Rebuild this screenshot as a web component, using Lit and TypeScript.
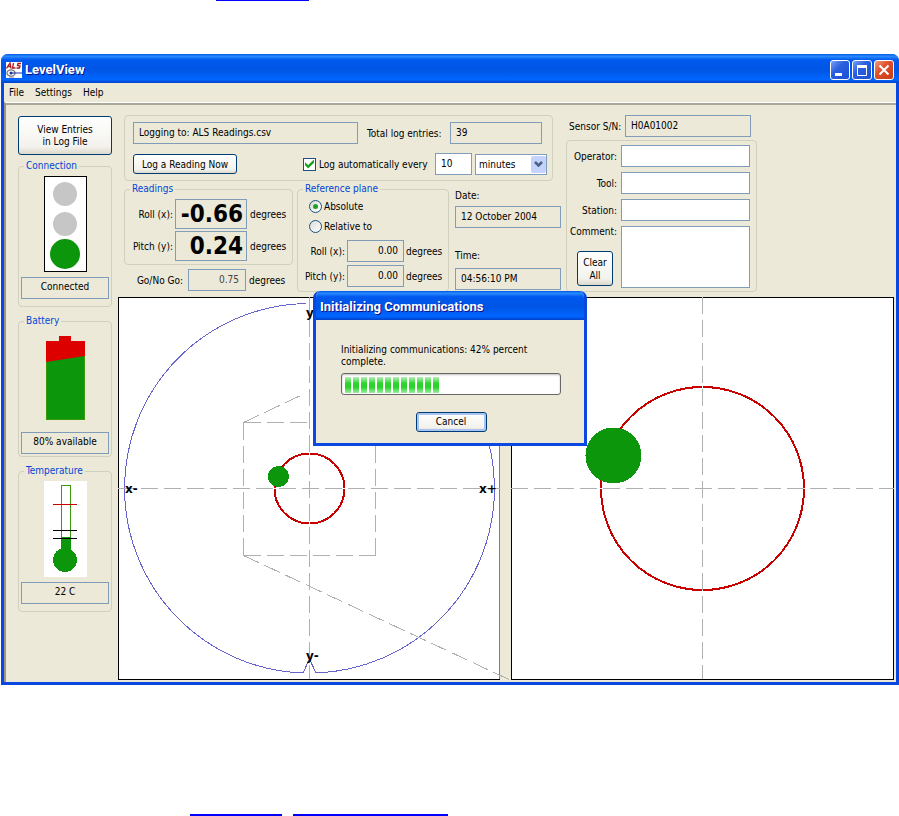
import { LitElement, html, css, svg } from "lit";
import { customElement } from "lit/decorators.js";

const sharedStyles = css`
  *, *::before, *::after { box-sizing: border-box; }
  button, input, select, textarea, output {
    font: inherit;
    color: #000;
    margin: 0;
  }
  .button {
    border: 1px solid #003c74;
    border-radius: 3px;
    background: linear-gradient(#ffffff, #f3f2ec 80%, #dcd8cc);
    padding: 0;
    text-align: center;
  }
  .field {
    height: 22px;
    border: 1px solid #7f9db9;
    border-radius: 0;
    background: #ece9d8;
    padding: 0 5px 2px;
    min-width: 0;
    outline: none;
  }
  .field.edit { background: #fff; }
  .field.right { text-align: right; }
  .field.centre { display: block; text-align: center; line-height: 18px; }
  .group {
    border: 1px solid #d0d0bf;
    border-radius: 4px;
    margin: 0;
    padding: 0;
    min-width: 0;
  }
  .legend {
    color: #0046d5;
    line-height: 14px;
    padding: 0 2px;
    margin-left: 5px;
  }
`;

@customElement("status-sidebar")
class StatusSidebar extends LitElement {
  static styles = [sharedStyles, css`
    :host { display: flex; flex-direction: column; padding: 11px 6px 0 12px; }
    .entries { height: 39px; line-height: 12px; margin-bottom: 4px; }
    .group { height: 148px; margin-bottom: 7px; }
    .group.short { height: 143px; }
    .stack { display: flex; flex-direction: column; gap: 5px; padding: 3px 2px 0; }
    .stack svg { align-self: center; display: block; }
    .group.short .stack { gap: 12px; padding-top: 8px; }
  `];
  render() {
    return html`
      <button class="button entries">View Entries<br />in Log File</button>
      <fieldset class="group">
        <legend class="legend">Connection</legend>
        <div class="stack">
          <svg width="43" height="96" viewBox="0 0 43 96" aria-hidden="true">
            <rect x=".5" y=".5" width="42" height="95" fill="#fff" stroke="#000" />
            <circle cx="21" cy="18" r="12" fill="#c6c6c6" />
            <circle cx="21" cy="48" r="12" fill="#c6c6c6" />
            <circle cx="21" cy="78" r="15" fill="#0b960b" />
          </svg>
          <output class="field centre">Connected</output>
        </div>
      </fieldset>
      <fieldset class="group short">
        <legend class="legend">Battery</legend>
        <div class="stack">
          <svg width="39" height="84" viewBox="0 0 39 84" aria-hidden="true">
            <path d="M13 0h12v5h14v30H0V5h13z" fill="#dc0000" />
            <path d="M0 26L39 20V84H0z" fill="#0b960b" />
            <path d="M.5 26V83.500H38.500V20" fill="none" stroke="#3a9a0b" />
          </svg>
          <output class="field centre">80% available</output>
        </div>
      </fieldset>
      <fieldset class="group">
        <legend class="legend">Temperature</legend>
        <div class="stack">
          <svg width="43" height="96" viewBox="0 0 43 96" shape-rendering="crispEdges" aria-hidden="true">
            <rect width="43" height="96" fill="#fff" />
            <rect x="17.500" y="4.500" width="9" height="62" fill="#fff" stroke="#3a9a0b" />
            <rect x="17" y="56" width="10" height="16" fill="#0b960b" />
            <circle cx="21" cy="79" r="12" fill="#0b960b" />
            <rect x="9" y="23" width="24" height="1" fill="#c80000" />
            <rect x="9" y="49" width="24" height="1" fill="#000" />
            <rect x="9" y="57" width="24" height="1" fill="#000" />
          </svg>
          <output class="field centre">22 C</output>
        </div>
      </fieldset>
    `;
  }
}

@customElement("reading-form")
class ReadingForm extends LitElement {
  static styles = [sharedStyles, css`
    :host { display: flex; gap: 5px; padding: 10px 0 5px 6px; }
    .left { width: 437px; flex: none; }
    .log { width: 429px; height: 66px; padding: 6px 5px 0 8px; margin-bottom: 1px; }
    .row { display: flex; align-items: center; }
    .log .row + .row { margin-top: 9px; }
    .path { flex: 1; margin-right: 9px; }
    .total { width: 83px; white-space: nowrap; }
    .entries { width: 92px; margin-right: 5px; }
    .log-now { width: 104px; height: 20px; margin-right: 66px; }
    .auto { display: flex; align-items: center; flex: 1; gap: 3px; white-space: nowrap; }
    .check {
      appearance: none; width: 13px; height: 13px; flex: none;
      border: 1px solid #1c5180; background: #fff;
      display: grid; place-items: center;
    }
    .check:checked::before {
      content: ""; width: 9px; height: 9px; background: #21a121;
      clip-path: polygon(0 30%, 35% 60%, 100% 0, 100% 35%, 35% 100%, 0 65%);
    }
    .every { width: 37px; margin-right: 3px; }
    .unit { display: grid; width: 72px; height: 21px; }
    .unit select {
      grid-area: 1 / 1; appearance: none; border: 1px solid #7f9db9; border-radius: 0;
      background: #fff; padding: 0 20px 0 3px; outline: none;
    }
    .unit svg { grid-area: 1 / 1; justify-self: end; align-self: center; margin-right: 1px; pointer-events: none; }
    .lower { display: flex; align-items: flex-start; }
    .current { flex: none; width: 169px; }
    .readings { height: 83px; padding: 3px 4px 0 0; }
    .readings .row + .row { margin-top: 2px; }
    .name { flex: 1; text-align: right; padding-right: 2px; white-space: nowrap; }
    .degrees { width: 38px; flex: none; }
    .big {
      width: 72px; height: 30px; font: bold 24px/28px "DejaVu Sans Condensed", sans-serif;
      padding: 0 3px 0 0; margin-right: 3px; flex: none;
    }
    .limit { margin-top: 4px; padding-right: 6px; }
    .limit .field { width: 58px; margin: 0 3px; color: #444; padding-right: 6px; }
    .plane { flex: none; width: 152px; height: 110px; margin: 0 6px 0 4px; }
    .plane .row + .row { margin-top: 3px; }
    .plane .field { width: 57px; margin-right: 2px; flex: none; }
    .plane .angle { padding-right: 4px; }
    .choice { display: flex; align-items: center; gap: 2px; height: 20px; padding-left: 11px; }
    .radio {
      appearance: none; width: 13px; height: 13px; border: 1px solid #1c5180; border-radius: 50%;
      background: linear-gradient(135deg, #dcdcd4, #fff); display: grid; place-items: center;
    }
    .radio:checked::before { content: ""; width: 5px; height: 5px; border-radius: 50%; background: #21a121; }
    .plane .angle.first { margin-top: 4px; }
    .when { flex: 1; min-width: 0; display: flex; flex-direction: column; padding-top: 7px; }
    .when label { line-height: 14px; margin-bottom: 3px; }
    .when .field + label { margin-top: 21px; margin-bottom: 5px; }
    .right-column { width: 191px; flex: none; }
    .serial { padding: 0 6px 0 3px; margin-bottom: 3px; }
    .serial .field { width: 126px; flex: none; }
    .serial label { flex: 1; white-space: nowrap; }
    .details {
      padding: 4px 6px 3px 0; display: grid; grid-template-columns: 50px 129px; gap: 5px 4px;
    }
    .details label { text-align: right; align-self: center; }
    .notes { display: flex; flex-direction: column; justify-content: space-between; align-items: flex-end; }
    .notes label { align-self: flex-end; }
    .notes .button { width: 36px; height: 35px; line-height: 13px; margin: 0 4px 2px 0; }
    .comment { height: 62px; resize: none; }
  `];
  render() {
    return html`
      <div class="left">
        <div class="group log">
          <div class="row">
            <input class="field path" readonly aria-label="Logging to" value="Logging to: ALS Readings.csv" />
            <label class="total" for="total">Total log entries:</label>
            <input class="field entries" id="total" readonly value="39" />
          </div>
          <div class="row">
            <button class="button log-now">Log a Reading Now</button>
            <label class="auto"><input class="check" type="checkbox" checked />Log automatically every</label>
            <input class="field edit every" aria-label="every" value="10" />
            <span class="unit">
              <select aria-label="minutes"><option>minutes</option></select>
              <svg width="15" height="17" viewBox="0 0 15 17" aria-hidden="true">
                <rect width="15" height="17" rx="2" fill="#c3d3fb" />
                <path d="M4 6l3.500 3.500L11 6" fill="none" stroke="#4d6185" stroke-width="2.500" />
              </svg>
            </span>
          </div>
        </div>
        <div class="lower">
          <div class="current">
            <fieldset class="group readings">
              <legend class="legend">Readings</legend>
              <div class="row">
                <label class="name" for="roll">Roll (x):</label>
                <input class="field right big" id="roll" readonly value="-0.66" />
                <span class="degrees">degrees</span>
              </div>
              <div class="row">
                <label class="name" for="pitch">Pitch (y):</label>
                <input class="field right big" id="pitch" readonly value="0.24" />
                <span class="degrees">degrees</span>
              </div>
            </fieldset>
            <div class="row limit">
              <label class="name" for="limit">Go/No Go:</label>
              <input class="field right" id="limit" readonly value="0.75" />
              <span class="degrees">degrees</span>
            </div>
          </div>
          <fieldset class="group plane">
            <legend class="legend">Reference plane</legend>
            <label class="choice"><input class="radio" type="radio" name="plane" checked />Absolute</label>
            <label class="choice"><input class="radio" type="radio" name="plane" />Relative to</label>
            <div class="row angle first">
              <label class="name" for="ref-roll">Roll (x):</label>
              <input class="field right" id="ref-roll" readonly value="0.00" />
              <span class="degrees">degrees</span>
            </div>
            <div class="row angle">
              <label class="name" for="ref-pitch">Pitch (y):</label>
              <input class="field right" id="ref-pitch" readonly value="0.00" />
              <span class="degrees">degrees</span>
            </div>
          </fieldset>
          <div class="when">
            <label for="date">Date:</label>
            <input class="field" id="date" readonly value="12 October 2004" />
            <label for="time">Time:</label>
            <input class="field" id="time" readonly value="04:56:10 PM" />
          </div>
        </div>
      </div>
      <div class="right-column">
        <div class="row serial">
          <label for="serial">Sensor S/N:</label>
          <input class="field" id="serial" readonly value="H0A01002" />
        </div>
        <div class="group details">
          <label for="operator">Operator:</label><input class="field edit" id="operator" />
          <label for="tool">Tool:</label><input class="field edit" id="tool" />
          <label for="station">Station:</label><input class="field edit" id="station" />
          <div class="notes">
            <label for="comment">Comment:</label>
            <button class="button">Clear<br />All</button>
          </div>
          <textarea class="field edit comment" id="comment"></textarea>
        </div>
      </div>
    `;
  }
}

@customElement("level-plot")
class LevelPlot extends LitElement {
  static styles = css`
    :host { display: block; }
    .plot { display: block; width: 100%; height: auto; }
    .axis { font: bold 12px "DejaVu Sans", sans-serif; }
  `;
  render() {
    const dash = (d: string) =>
      svg`<path d=${d} fill="none" stroke="#b0b0b0" stroke-dasharray="17 6" />`;
    return html`
      <svg class="plot" viewBox="0 0 776 383" shape-rendering="crispEdges">
        <rect width="382" height="383" fill="#fff" />
        <path d="M382 .5H.5V382.500H382" fill="none" stroke="#000" />
        <path d="M381.500 1V382" stroke="#808080" />
        <rect x="393.500" y=".5" width="382" height="382" fill="#fff" stroke="#000" />
        <path d="M188 6.500A185 185 0 0 0 6.500 191.500A185 185 0 0 0 185 376L191.500 362L198 376A185 185 0 0 0 376.500 191.500A185 185 0 0 0 195 6.500" fill="none" stroke="#6464cc" />
        <circle cx="191.500" cy="191.500" r="35" fill="none" stroke="#c80000" stroke-width="2" />
        <circle cx="584.500" cy="191.500" r="101.500" fill="none" stroke="#c80000" stroke-width="2" />
        <path d="M150 191.500H230M191.500 150V230M470 191.500H700M584.500 80V300" stroke="#fff" />
        ${dash("M0 191.5H382")}
        ${dash("M191.5 0V382")}
        ${dash("M125.5 125.5H257.5")}
        ${dash("M125.5 125.5V258")}
        ${dash("M257.5 125.5V258")}
        ${dash("M125.5 258.5H258")}
        ${dash("M125.5 125.5L188 96")}
        ${dash("M125.5 258.5L391 382.5")}
        ${dash("M393 191.5H776")}
        ${dash("M584.5 0V382")}
        <circle cx="160.500" cy="179.500" r="10.500" fill="#0b960b" />
        <circle cx="495.500" cy="158.500" r="28" fill="#0b960b" />
        <g class="axis">
          <text x="7" y="196">x-</text>
          <text x="361" y="196">x+</text>
          <text x="188" y="20">y</text>
          <text x="188" y="363">y-</text>
        </g>
      </svg>
    `;
  }
}

@customElement("progress-dialog")
class ProgressDialog extends LitElement {
  static styles = [sharedStyles, css`
    :host {
      display: block; width: 274px;
      border: solid #0a48e0; border-width: 0 3px 3px;
      border-radius: 7px 7px 0 0; background: #ece9d8; overflow: hidden;
    }
    .title {
      height: 29px; margin: 0 -3px; padding-left: 7px;
      background: linear-gradient(#0058e6, #2a8bff 8%, #0058ee 20%, #0055e5 55%, #0066ff 88%, #0040c8);
      color: #fff; font: bold 13px/32px Roboto, sans-serif; text-shadow: 1px 1px #0f1089;
    }
    .content { padding: 24px 23px 11px 25px; display: flex; flex-direction: column; }
    .message { margin: 0 0 5px; line-height: 12px; }
    .bar {
      height: 22px; border: 1px solid #686868; border-radius: 3px; background: #fff;
      box-shadow: inset 0 1px 2px #bebebe; display: flex; gap: 2px; padding: 3px;
    }
    .block { width: 6px; height: 16px; background: linear-gradient(#b8f0b8, #2cd42c 40%, #2cd42c 65%, #a0eca0); }
    .button {
      align-self: center; width: 71px; height: 20px; margin-top: 17px;
      box-shadow: inset 0 0 0 2px #a9c4f4;
    }
  `];
  render() {
    return html`
      <div class="title">Initializing Communications</div>
      <div class="content">
        <p class="message">Initializing communications: 42% percent<br />complete.</p>
        <div class="bar" role="progressbar" aria-valuenow="42">
          ${Array.from({ length: 12 }, () => html`<span class="block"></span>`)}
        </div>
        <button class="button">Cancel</button>
      </div>
    `;
  }
}

@customElement("app-root")
class AppRoot extends LitElement {
  static styles = [sharedStyles, css`
    :host {
      display: flow-root; background: #fff; color: #000;
      font: 10px "DejaVu Sans Condensed", Roboto, sans-serif;
    }
    .underlines { display: flex; gap: 11px; }
    .underlines.top { padding-left: 216px; }
    .underlines.bottom { padding-left: 190px; margin-top: 129px; }
    .underline { height: 2px; background: #0000ff; width: 92px; }
    .top .underline { height: 1px; width: 93px; }
    .underline.long { width: 155px; }
    .window {
      margin: 53px 0 0 1px; display: grid;
      border: solid #0848e0; border-width: 0 3px 3px;
      border-radius: 7px 7px 0 0; background: #ece9d8;
    }
    .frame { grid-area: 1 / 1; min-width: 0; }
    .overlay { grid-area: 1 / 1; place-self: center; }
    .title {
      height: 29px; margin: 0 -3px; padding: 3px 5px 0; display: flex; align-items: center;
      border-radius: 7px 7px 0 0;
      background: linear-gradient(#0058e6, #2a8bff 8%, #0058ee 20%, #0055e5 55%, #0066ff 88%, #0040c8);
    }
    .name { flex: 1; margin-left: 3px; font: bold 13px/20px Roboto, sans-serif; color: #fff; text-shadow: 1px 1px #0f1089; }
    .controls { display: flex; gap: 2px; }
    .control {
      width: 20px; height: 20px; padding: 0; border: 1px solid #fff; border-radius: 3px;
      background: linear-gradient(135deg, #7ba2f4, #2a5fe0 40%, #1f50d0); display: grid; place-items: center;
    }
    .control.close { background: linear-gradient(135deg, #f0a088, #e0502a 40%, #c83c14); }
    .menu { display: flex; gap: 11px; height: 19px; padding-left: 5px; }
    .menu button { border: 0; background: none; padding: 0; line-height: 18px; }
    .body { border-top: 1px solid #fff; border-left: 2px solid #9a968c; padding-bottom: 2px; }
    .inner { display: flex; border-top: 2px solid #a9a69a; padding-right: 2px; }
    .side { width: 112px; flex: none; }
    .main { flex: 1; min-width: 0; }
  `];
  render() {
    return html`
      <div class="underlines top"><span class="underline"></span></div>
      <main class="window">
        <div class="frame">
          <header class="title">
            <svg width="16" height="16" viewBox="0 0 16 16" aria-hidden="true">
              <rect width="16" height="16" fill="#fff" />
              <g fill="none" stroke="#b01818" stroke-width="1.300">
                <path d="M0.500 6.500L4 1L5 6.500M2 4.500H5M7.500 1L6.500 6H9.500M15 1.500H12L11.500 3.500L14 4L13.500 6H10.500" />
              </g>
              <ellipse cx="5" cy="11" rx="4" ry="3.200" fill="none" stroke="#777" stroke-width="1.300" />
              <path d="M5 11H16" stroke="#2030a0" />
              <circle cx="5" cy="11" r="1.500" fill="#2030a0" />
              <path d="M3 15H8" stroke="#888" />
            </svg>
            <span class="name">LevelView</span>
            <div class="controls">
              <button class="control" aria-label="Minimize">
                <svg width="18" height="18" viewBox="0 0 18 18"><rect x="4" y="12" width="7" height="3" fill="#fff" /></svg>
              </button>
              <button class="control" aria-label="Maximize">
                <svg width="18" height="18" viewBox="0 0 18 18"><path d="M4.500 4V14.500H13.500V4" fill="none" stroke="#fff" /><rect x="4" y="4" width="10" height="3" fill="#fff" /></svg>
              </button>
              <button class="control close" aria-label="Close">
                <svg width="18" height="18" viewBox="0 0 18 18"><path d="M4.500 4.500L13.500 13.500M13.500 4.500L4.500 13.500" stroke="#fff" stroke-width="2" /></svg>
              </button>
            </div>
          </header>
          <nav class="menu">
            <button>File</button><button>Settings</button><button>Help</button>
          </nav>
          <div class="body">
            <div class="inner">
              <status-sidebar class="side"></status-sidebar>
              <div class="main">
                <reading-form></reading-form>
                <level-plot></level-plot>
              </div>
            </div>
          </div>
        </div>
        <progress-dialog class="overlay"></progress-dialog>
      </main>
      <div class="underlines bottom">
        <span class="underline"></span><span class="underline long"></span>
      </div>
    `;
  }
}
